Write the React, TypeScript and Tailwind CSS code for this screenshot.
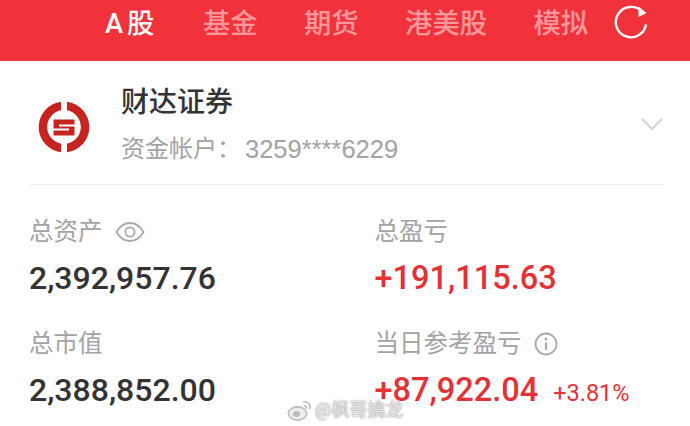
import React from 'react';

const CJK = "font-['Roboto','Noto_Sans_CJK_SC',sans-serif]";

const TABS = ['基金', '期货', '港美股', '模拟'];

const Logo = () => (
  <svg width="52" height="52" viewBox="0 0 52 52" fill="#c5241f">
    <path d="M23 0.7A25.5 25.5 0 0 0 23 51.3V42.7A17 17 0 0 1 23 9.3Z" />
    <path d="M29 0.7A25.5 25.5 0 0 1 29 51.3V42.7A17 17 0 0 0 29 9.3Z" />
    <path d="M15.5 18.5H36.5V23.5H21V25.5H36.5V34.5H15.5V29.5H31V27.5H15.5Z" />
  </svg>
);

const Stat = ({ label, value, red, extra, icon }: {
  label: string;
  value: string;
  red?: boolean;
  extra?: string;
  icon?: React.ReactNode;
}) => (
  <div className="h-[112px]">
    <div className="flex h-[30px] items-center gap-[12px] text-[24.5px] leading-[30px] text-[#a3a3a3]">
      <span>{label}</span>
      {icon}
    </div>
    <div className={`mt-[18px] flex items-baseline gap-[15px] leading-[26px] font-medium ${red ? 'text-[32.5px] text-[#e23236]' : 'text-[32px] text-[#333333]'}`}>
      <span>{value}</span>
      {extra && <span className="text-[23.5px] font-normal">{extra}</span>}
    </div>
  </div>
);

export default function App() {
  return (
    <div className={`relative h-[426px] w-[690px] overflow-hidden bg-white ${CJK}`}>
      {/* 顶部标签 */}
      <div className="flex h-[61px] items-start bg-[#f2323a] pl-[105px] pt-[6px]">
        <div className="flex gap-[46.5px] text-[27.3px] leading-[36px] font-medium text-white/50">
          <span className="mr-[2px] text-white"><span className="mr-[4px]">A</span>股</span>
          {TABS.map((tab) => (
            <span key={tab}>{tab}</span>
          ))}
        </div>
        <svg className="ml-[25px] mt-[-2px]" width="36" height="36" viewBox="0 0 36 36" fill="none">
          <path d="M33 20.5A15.2 15.2 0 1 1 29 7.6" stroke="#fff" strokeWidth="2.4" />
          <path d="M25.5 2.5L33.5 9L25.5 13Z" fill="#fff" />
        </svg>
      </div>

      {/* 账户 */}
      <div className="ml-[29px] mr-[26px] flex h-[124px] items-start border-b border-[#efefef]">
        <div className="ml-[9px] mt-[40px]"><Logo /></div>
        <div className="ml-[31px] mt-[22px]">
          <div className="text-[28px] leading-[40px] font-medium text-[#333333]">财达证券</div>
          <div className="mt-[8px] flex items-center text-[24px] leading-[36px] text-[#a3a3a3]">
            <span>资金帐户：</span>
            <span className="ml-[4px] font-['Liberation_Sans',sans-serif] text-[25.5px]">3259****6229</span>
          </div>
        </div>
        <svg className="ml-auto mr-[1px] mt-[56px]" width="22" height="14" viewBox="0 0 22 14" fill="none">
          <path d="M1 2L11 12L21 2" stroke="#d4d4d4" strokeWidth="2" />
        </svg>
      </div>

      {/* 资产数据 */}
      <div className="mt-[32px] ml-[29px] grid grid-cols-[345.5px_1fr]">
        <Stat
          label="总资产"
          value="2,392,957.76"
          icon={
            <svg width="30" height="22" viewBox="0 0 30 22" fill="none">
              <path d="M1.5 11C5 5 9.5 2 15 2S25 5 28.5 11C25 17 20.5 20 15 20S5 17 1.5 11Z" stroke="#aaaaaa" strokeWidth="1.8" />
              <circle cx="15" cy="11" r="4.6" stroke="#aaaaaa" strokeWidth="1.8" />
            </svg>
          }
        />
        <Stat label="总盈亏" value="+191,115.63" red />
        <Stat label="总市值" value="2,388,852.00" />
        <Stat
          label="当日参考盈亏"
          value="+87,922.04"
          red
          extra="+3.81%"
          icon={
            <svg width="24" height="24" viewBox="0 0 24 24" fill="none">
              <circle cx="12" cy="12" r="10.5" stroke="#aaaaaa" strokeWidth="1.8" />
              <path d="M12 10.5V18" stroke="#aaaaaa" strokeWidth="2.2" />
              <circle cx="12" cy="7" r="1.5" fill="#aaaaaa" />
            </svg>
          }
        />
      </div>

      {/* 水印 */}
      <div className="absolute left-[287px] top-[398px] flex h-[24px] items-center gap-[2px] text-[18px] leading-[18px] text-[#e6e6e6] [text-shadow:0_0_2px_#777777]">
        <svg width="26" height="24" viewBox="0 0 26 24" fill="#eeeeee">
          <ellipse cx="10.5" cy="15.5" rx="9.2" ry="6.6" stroke="#bbbbbb" strokeWidth="1.6" />
          <ellipse cx="9.5" cy="16" rx="3.6" ry="3" fill="#bbbbbb" />
          <path d="M16 3.5C20.5 3 24 6.5 23 11M16.5 7.5C18.5 7.2 20 8.8 19.7 10.8" fill="none" stroke="#bbbbbb" strokeWidth="1.5" />
        </svg>
        <span>@枫哥擒龙</span>
      </div>
    </div>
  );
}
